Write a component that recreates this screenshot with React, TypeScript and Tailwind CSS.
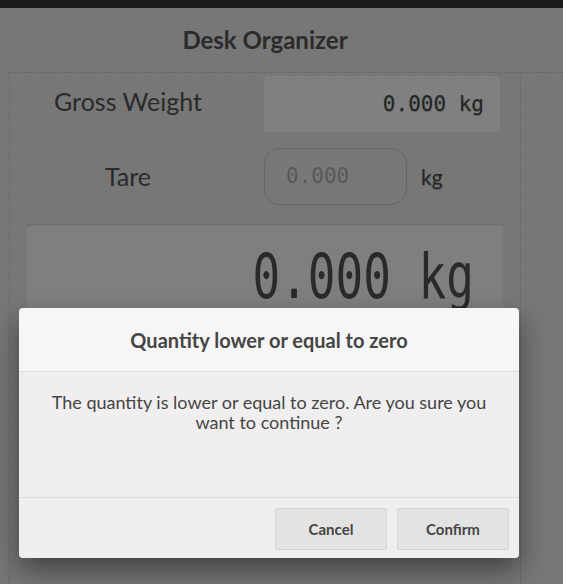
import React from "react";

export default function App() {
  return (
    <div className="relative h-screen w-full overflow-hidden bg-[#777777] font-['Lato','Noto_Sans',sans-serif] text-[#2a2a2a]">
      <div className="h-2 bg-[#1c1c1c]" />
      <div className="flex h-[calc(100%-8px)]">
        <div className="flex w-[521px] flex-col">
          <div className="flex h-[64px] items-center justify-center pl-[9px]">
            <h1 className="text-[24px] font-bold leading-none text-[#2b2b2b]">Desk Organizer</h1>
          </div>
          <div className="ml-[9px] flex-1 border-l border-r border-t border-dashed border-[#686868] px-4">
            <div className="mt-[3px] flex h-[56px] items-center">
              <div className="w-[204px] pb-[5px] text-center text-[25px] leading-none">Gross Weight</div>
              <div className="ml-[34px] flex h-[56px] w-[236px] items-center justify-end rounded-[4px] bg-[#808080] pr-4 font-['DejaVu_Sans_Mono',monospace] text-[21px] leading-none text-[#252525] [text-shadow:0_1px_1px_rgba(0,0,0,0.25)]">
                0.000 kg
              </div>
            </div>
            <div className="mt-4 flex h-[57px] items-center">
              <div className="w-[204px] text-center text-[25px] leading-none">Tare</div>
              <div className="ml-[34px] flex h-[57px] w-[143px] items-center rounded-[16px] border border-[#666666] bg-[#787878] pl-[21px] font-['DejaVu_Sans_Mono',monospace] text-[21px] leading-none text-[#585858]">
                0.000
              </div>
              <div className="ml-[14px] text-[21px] leading-none text-[#262626] [text-shadow:0_1px_1px_rgba(0,0,0,0.25)]">kg</div>
            </div>
            <div className="mt-[19px] h-[120px] rounded-[4px] bg-[#7f7f7f] pr-[30px] pt-[30px] shadow-[inset_0_1px_2px_rgba(0,0,0,0.18)]">
              <div className="origin-center scale-y-[1.34] text-right font-['DejaVu_Sans_Mono',monospace] text-[46px] font-light leading-[46px] text-[#2a2a2a]">
                0.000 kg
              </div>
            </div>
          </div>
        </div>
        <div className="mt-[64px] flex-1 border-t border-dashed border-[#686868]" />
      </div>

      <div className="absolute left-[19px] top-[308px] w-[500px] overflow-hidden rounded-[4px] shadow-[0_12px_28px_rgba(0,0,0,0.45)]">
        <div className="flex h-[64px] items-center justify-center border-b border-[#dcdcdc] bg-[#f6f6f6]">
          <h2 className="text-[20px] font-bold leading-none text-[#454545]">Quantity lower or equal to zero</h2>
        </div>
        <div className="h-[125px] bg-[#f0eeef] px-5 pt-5 text-center text-[18px] leading-[20px] text-[#454545]">
          The quantity is lower or equal to zero. Are you sure you want to continue ?
        </div>
        <div className="flex justify-end gap-[10px] border-t border-[#dcdcdc] bg-[#f0eeef] pb-[8px] pr-[10px] pt-[10px]">
          <button className="h-[42px] w-[112px] rounded-[2px] border border-[#d4d4d4] bg-[#e4e3e4] text-[15px] font-bold text-[#454545]">
            Cancel
          </button>
          <button className="h-[42px] w-[112px] rounded-[2px] border border-[#d4d4d4] bg-[#e4e3e4] text-[15px] font-bold text-[#454545]">
            Confirm
          </button>
        </div>
      </div>
    </div>
  );
}
